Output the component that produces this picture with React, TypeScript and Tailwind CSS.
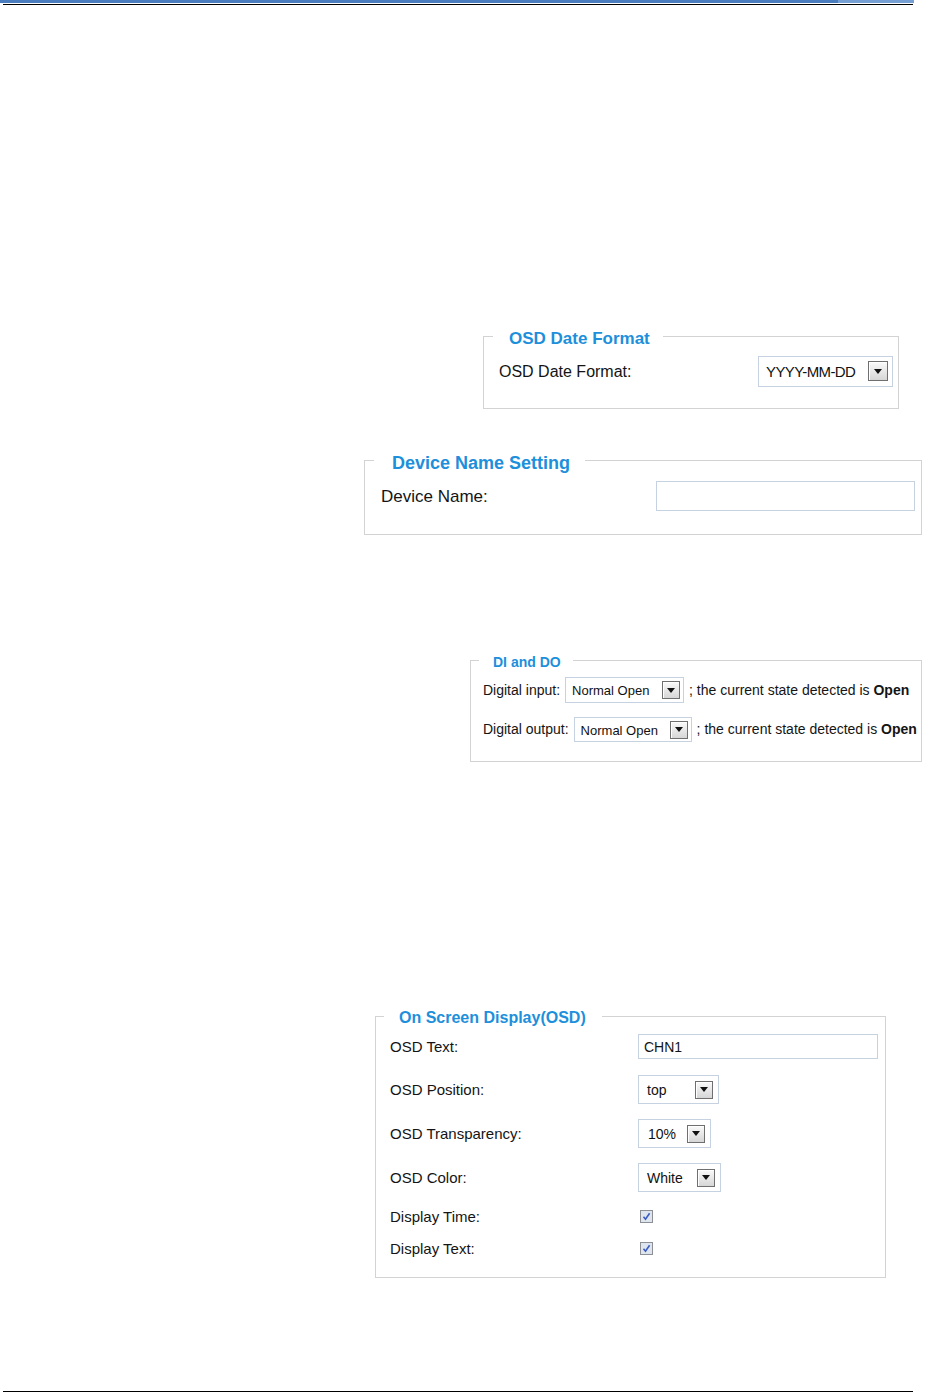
import React from "react";

function Arrow({ className }: { className: string }) {
  return (
    <div
      className={`flex shrink-0 items-center justify-center border border-[#6f6f6f] bg-linear-to-b from-[#fafafa] to-[#d6d6d6] shadow-[inset_1px_1px_0_#ffffff] ${className}`}
    >
      <svg width="8" height="5" viewBox="0 0 8 5">
        <path d="M0 0h8L4 5z" fill="#111" />
      </svg>
    </div>
  );
}

function Select({
  value,
  className,
  textClass,
  arrowClass,
}: {
  value: string;
  className: string;
  textClass: string;
  arrowClass: string;
}) {
  return (
    <div className={`flex shrink-0 items-center justify-between border border-[#c6d2e2] bg-white ${className}`}>
      <span className={`relative top-[1px] whitespace-nowrap text-[#111] ${textClass}`}>{value}</span>
      <Arrow className={arrowClass} />
    </div>
  );
}

function Check() {
  return (
    <div className="flex h-[13px] w-[13px] items-center justify-center border border-[#8c8f94] bg-[#dfe5ee]">
      <svg width="9" height="9" viewBox="0 0 9 9">
        <path d="M1.5 4.8l2 2.4L7.6 1.2" stroke="#3a5cc4" strokeWidth="1.6" fill="none" />
      </svg>
    </div>
  );
}

export default function App() {
  return (
    <div className="flex h-[1393px] w-[928px] flex-col bg-white font-['Liberation_Sans',Arial,sans-serif] text-[#141414]">
      {/* page header rule */}
      <div className="flex h-[3px] w-[914px]">
        <div className="h-full flex-1 bg-[#4a7dbd]" />
        <div className="h-full w-[76px] bg-[#76a0d3]" />
      </div>
      <div className="ml-[3px] mt-[1px] h-[1px] w-[910px] bg-black" />

      {/* OSD Date Format */}
      <fieldset className="ml-[483px] mt-[321px] w-[416px] border border-[#d3d3d3]">
        <legend className="ml-[9px] pl-[16px] pr-[13px] text-[17px] font-bold leading-[20px] text-[#1d8fdb]">
          <span className="relative top-[3px]">OSD Date Format</span>
        </legend>
        <div className="h-[62px] pl-[15px] pr-[5px] pt-[10px]">
          <div className="flex h-[30px] items-center justify-between">
            <span className="relative top-[1px] text-[16px]">OSD Date Format:</span>
            <Select
              value="YYYY-MM-DD"
              className="h-[31px] w-[135px] pl-[7px] pr-[4px]"
              textClass="text-[15px] tracking-[-0.6px]"
              arrowClass="h-[20px] w-[20px]"
            />
          </div>
        </div>
      </fieldset>

      {/* Device Name Setting */}
      <fieldset className="ml-[364px] mt-[40px] w-[558px] border border-[#d3d3d3]">
        <legend className="ml-[9px] pl-[18px] pr-[15px] text-[18px] font-bold leading-[22px] text-[#1d8fdb]">
          <span className="relative top-[3px]">Device Name Setting</span>
        </legend>
        <div className="h-[63px] pl-[16px] pr-[6px] pt-[10px]">
          <div className="flex h-[30px] items-center justify-between">
            <span className="relative top-[1px] text-[17px]">Device Name:</span>
            <div className="h-[30px] w-[259px] border border-[#c6d2e2] bg-white" />
          </div>
        </div>
      </fieldset>

      {/* DI and DO */}
      <fieldset className="ml-[470px] mt-[116px] w-[452px] border border-[#d3d3d3]">
        <legend className="ml-[8px] pl-[14px] pr-[12px] text-[14px] font-bold leading-[18px] text-[#1d8fdb]">
          <span className="relative top-[2px]">DI and DO</span>
        </legend>
        <div className="h-[92px] pl-[12px] pt-[8px] text-[14px]">
          <div className="flex h-[26px] items-center gap-[5px] whitespace-nowrap">
            <span>Digital input:</span>
            <Select
              value="Normal Open"
              className="h-[26px] w-[119px] pl-[6px] pr-[3px]"
              textClass="text-[13px]"
              arrowClass="h-[18px] w-[18px]"
            />
            <span>
              ; the current state detected is <b>Open</b>
            </span>
          </div>
          <div className="mt-[14px] flex h-[25px] items-center gap-[5px] whitespace-nowrap">
            <span>Digital output:</span>
            <Select
              value="Normal Open"
              className="h-[25px] w-[118px] pl-[6px] pr-[3px]"
              textClass="text-[13px]"
              arrowClass="h-[18px] w-[18px]"
            />
            <span>
              ; the current state detected is <b>Open</b>
            </span>
          </div>
        </div>
      </fieldset>

      {/* On Screen Display */}
      <fieldset className="ml-[375px] mt-[244px] w-[511px] border border-[#d3d3d3]">
        <legend className="ml-[8px] pl-[15px] pr-[16px] text-[16px] font-bold leading-[20px] text-[#1d8fdb]">
          <span className="relative top-[2px]">On Screen Display(OSD)</span>
        </legend>
        <div className="h-[251px] pl-[14px] pt-[8px] text-[15px]">
          <div className="flex h-[25px] items-center">
            <span className="relative top-[1px] w-[248px]">OSD Text:</span>
            <div className="flex h-[25px] w-[240px] items-center border border-[#c6d2e2] pl-[5px] text-[14px]">
              <span className="relative top-[1px]">CHN1</span>
            </div>
          </div>
          <div className="mt-[16px] flex h-[29px] items-center">
            <span className="relative top-[1px] w-[248px]">OSD Position:</span>
            <Select value="top" className="h-[29px] w-[81px] pl-[8px] pr-[5px]" textClass="text-[14px]" arrowClass="h-[18px] w-[18px]" />
          </div>
          <div className="mt-[15px] flex h-[29px] items-center">
            <span className="relative top-[1px] w-[248px]">OSD Transparency:</span>
            <Select value="10%" className="h-[29px] w-[73px] pl-[9px] pr-[5px]" textClass="text-[14px]" arrowClass="h-[18px] w-[18px]" />
          </div>
          <div className="mt-[15px] flex h-[29px] items-center">
            <span className="relative top-[1px] w-[248px]">OSD Color:</span>
            <Select value="White" className="h-[29px] w-[83px] pl-[8px] pr-[5px]" textClass="text-[14px]" arrowClass="h-[18px] w-[18px]" />
          </div>
          <div className="mt-[14px] flex h-[20px] items-center">
            <span className="relative top-[1px] w-[250px]">Display Time:</span>
            <Check />
          </div>
          <div className="mt-[12px] flex h-[20px] items-center">
            <span className="relative top-[1px] w-[250px]">Display Text:</span>
            <Check />
          </div>
        </div>
      </fieldset>

      {/* footer rule */}
      <div className="mb-[1px] ml-[3px] mt-auto h-[1px] w-[910px] bg-black" />
    </div>
  );
}
